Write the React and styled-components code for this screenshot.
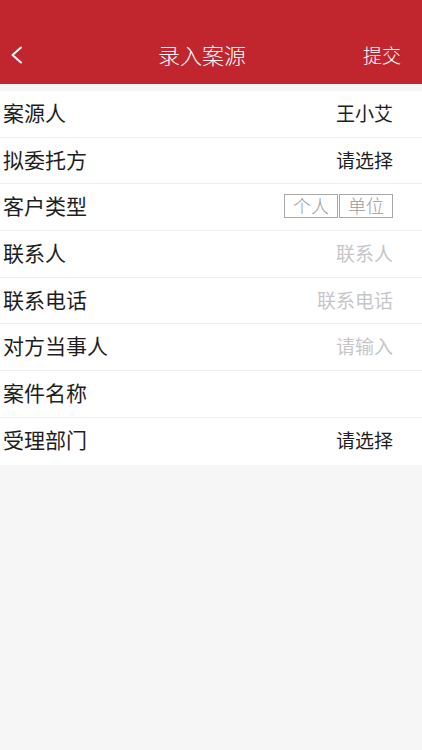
import React from "react";
import styled, { createGlobalStyle } from "styled-components";

const Global = createGlobalStyle`
  html, body { margin: 0; padding: 0; background: #f6f6f6; }
  body { font-family: "Noto Sans CJK SC", "Noto Sans", sans-serif; }
  * { box-sizing: border-box; }
`;

const Page = styled.div`
  width: 422px;
  min-height: 750px;
  background: #f6f6f6;
`;

const Header = styled.header`
  background: #c1262f;
  height: 84px;
  padding-top: 26px;
  color: #fff;
`;

const Bar = styled.div`
  height: 58px;
  display: grid;
  grid-template-columns: 80px 1fr 80px;
  align-items: center;
`;

const Back = styled.button`
  background: none;
  border: 0;
  padding: 0 0 0 10px;
  display: flex;
  align-items: center;
  justify-self: start;
`;

const Title = styled.h1`
  margin: 0;
  font-size: 22px;
  font-weight: 300;
  text-align: center;
  line-height: 1;
  padding: 0 18px 2px 0;
`;

const Submit = styled.span`
  font-size: 19px;
  font-weight: 300;
  justify-self: end;
  padding: 0 21px 2px 0;
  line-height: 1;
`;

const List = styled.ul`
  list-style: none;
  margin: 7px 0 0;
  padding: 0;
  background: #fff;
`;

const Row = styled.li`
  height: 46.7px;
  display: flex;
  align-items: center;
  justify-content: space-between;
  padding: 0 29px 3px 3px;
  border-bottom: 1px solid ${(p) => (p.$last ? "transparent" : "#eeeeee")};
`;

const Label = styled.span`
  font-size: 21px;
  color: #1e1e1e;
  line-height: 1;
`;

const Value = styled.span`
  font-size: 19px;
  line-height: 1;
  color: ${(p) => (p.$placeholder ? "#c6c6ca" : "#1e1e1e")};
`;

const Segments = styled.div`
  display: flex;
  gap: 1px;
  margin-top: 1px;
`;

const Segment = styled.span`
  width: 54px;
  height: 24px;
  border: 1px solid #a8a8a8;
  color: #9a9a9a;
  font-size: 18px;
  font-weight: 300;
  display: flex;
  align-items: center;
  justify-content: center;
  line-height: 1;
  padding-bottom: 2px;
`;

const rows = [
  { label: "案源人", value: "王小艾" },
  { label: "拟委托方", value: "请选择" },
  { label: "客户类型", segments: ["个人", "单位"] },
  { label: "联系人", value: "联系人", placeholder: true },
  { label: "联系电话", value: "联系电话", placeholder: true },
  { label: "对方当事人", value: "请输入", placeholder: true },
  { label: "案件名称" },
  { label: "受理部门", value: "请选择" },
];

export default function App() {
  return (
    <Page>
      <Global />
      <Header>
        <Bar>
          <Back aria-label="返回">
            <svg width="13" height="18" viewBox="0 0 13 18">
              <path d="M11 1.5 L2.5 9 L11 16.5" fill="none" stroke="#fff" strokeWidth="2" strokeLinecap="round" strokeLinejoin="round" />
            </svg>
          </Back>
          <Title>录入案源</Title>
          <Submit>提交</Submit>
        </Bar>
      </Header>
      <List>
        {rows.map((r, i) => (
          <Row key={r.label} $last={i === rows.length - 1}>
            <Label>{r.label}</Label>
            {r.segments ? (
              <Segments>
                {r.segments.map((s) => (
                  <Segment key={s}>{s}</Segment>
                ))}
              </Segments>
            ) : r.value ? (
              <Value $placeholder={r.placeholder}>{r.value}</Value>
            ) : null}
          </Row>
        ))}
      </List>
    </Page>
  );
}
